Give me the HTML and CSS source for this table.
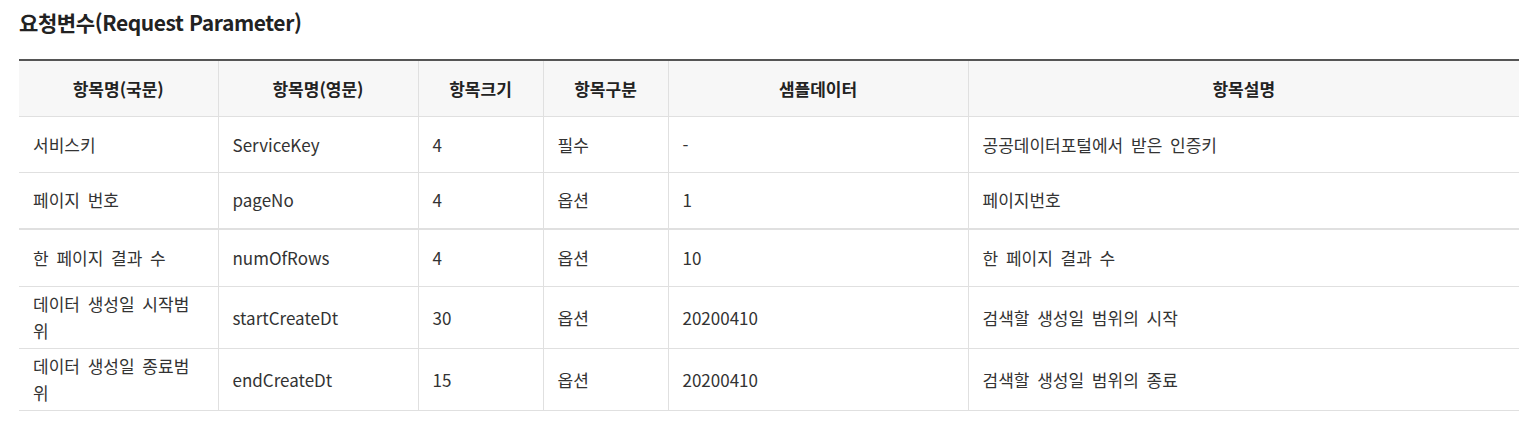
FILE: index.html
```html
<!DOCTYPE html>
<html lang="ko">
<head>
<meta charset="utf-8">
<title>요청변수</title>
<link rel="stylesheet" href="styles.css">
</head>
<body>
<div class="section">
  <h3 class="title">요청변수(Request Parameter)</h3>
  <table class="param-table">
    <colgroup>
      <col class="c1"><col class="c2"><col class="c3"><col class="c4"><col class="c5"><col class="c6">
    </colgroup>
    <thead>
      <tr>
        <th>항목명(국문)</th>
        <th>항목명(영문)</th>
        <th>항목크기</th>
        <th>항목구분</th>
        <th>샘플데이터</th>
        <th>항목설명</th>
      </tr>
    </thead>
    <tbody>
      <tr>
        <td>서비스키</td><td>ServiceKey</td><td>4</td><td>필수</td><td>-</td><td>공공데이터포털에서 받은 인증키</td>
      </tr>
      <tr>
        <td>페이지 번호</td><td>pageNo</td><td>4</td><td>옵션</td><td>1</td><td>페이지번호</td>
      </tr>
    </tbody>
    <tbody class="split">
      <tr>
        <td>한 페이지 결과 수</td><td>numOfRows</td><td>4</td><td>옵션</td><td>10</td><td>한 페이지 결과 수</td>
      </tr>
      <tr>
        <td>데이터 생성일 시작범위</td><td>startCreateDt</td><td>30</td><td>옵션</td><td>20200410</td><td>검색할 생성일 범위의 시작</td>
      </tr>
      <tr>
        <td>데이터 생성일 종료범위</td><td>endCreateDt</td><td>15</td><td>옵션</td><td>20200410</td><td>검색할 생성일 범위의 종료</td>
      </tr>
    </tbody>
  </table>
</div>
</body>
</html>
```

FILE: styles.css
```css
html, body {
  margin: 0;
  padding: 0;
  background: #fff;
}

body {
  font-family: "Noto Sans CJK KR", "Noto Sans", sans-serif;
  color: #333;
}

.section {
  padding: 8px 20px 0 19px;
}

.title {
  margin: 0 0 22px 0;
  font-size: 21px;
  line-height: 29px;
  font-weight: 700;
  color: #222;
  letter-spacing: -0.4px;
}

.param-table {
  width: 1500px;
  border-collapse: collapse;
  table-layout: fixed;
  border-top: 2px solid #555;
  font-size: 17px;
}

.c1 { width: 199px; }
.c2 { width: 200px; }
.c3 { width: 125px; }
.c4 { width: 125px; }
.c5 { width: 300px; }
.c6 { width: 551px; }

.param-table th,
.param-table td {
  border-bottom: 1px solid #e0e0e0;
  border-left: 1px solid #e0e0e0;
  vertical-align: middle;
  line-height: 27px;
}

.param-table th:first-child,
.param-table td:first-child {
  border-left: none;
}

.param-table th {
  background: #f7f7f7;
  height: 55px;
  padding: 0 14px;
  font-weight: 700;
  text-align: center;
  color: #222;
}

.param-table td {
  box-sizing: border-box;
  height: 56px;
  padding: 3px 14px 4px;
  text-align: left;
  color: #333;
  word-spacing: 3px;
}

.param-table tbody.split tr:first-child td {
  height: 58px;
  border-top: 2px solid #e0e0e0;
}
```
